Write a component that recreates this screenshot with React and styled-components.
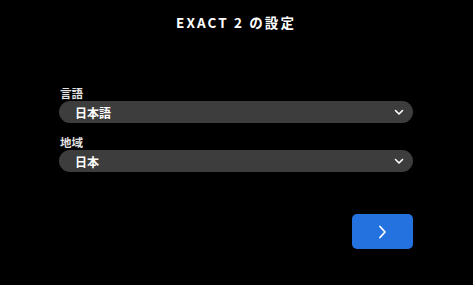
import styled, { createGlobalStyle } from "styled-components";

const Global = createGlobalStyle`
  html, body {
    margin: 0;
    padding: 0;
    background: #000;
  }
  body {
    font-family: "Noto Sans CJK JP", "Noto Sans", sans-serif;
    color: #fff;
  }
`;

const Page = styled.div`
  width: 473px;
  height: 285px;
  box-sizing: border-box;
  padding: 14px 60px 0 59px;
  display: flex;
  flex-direction: column;
`;

const Title = styled.h1`
  margin: 0;
  font-size: 13.5px;
  line-height: 17px;
  font-weight: 700;
  letter-spacing: 2.1px;
  text-align: center;
  color: #fff;
`;

const Form = styled.div`
  margin-top: 55px;
  display: flex;
  flex-direction: column;
  gap: 12px;
`;

const Field = styled.div`
  display: flex;
  flex-direction: column;
  gap: 1px;
`;

const Label = styled.div`
  font-size: 11.5px;
  line-height: 14px;
  font-weight: 700;
  color: #e2e2e2;
  padding-left: 1px;
`;

const Select = styled.div`
  height: 22px;
  border-radius: 11px;
  background: #3d3d3d;
  display: flex;
  align-items: center;
  justify-content: space-between;
  padding: 0 9px 0 16px;
  font-size: 12px;
  font-weight: 700;
  color: #fff;
`;

const Footer = styled.div`
  margin-top: 42px;
  display: flex;
  justify-content: flex-end;
`;

const NextButton = styled.button`
  width: 61px;
  height: 35px;
  border: none;
  border-radius: 5px;
  background: #2472e0;
  display: flex;
  align-items: center;
  justify-content: center;
  padding: 0;
  cursor: pointer;
`;

function Chevron() {
  return (
    <svg width="10" height="7" viewBox="0 0 10 7">
      <path
        d="M1.5 1.5 L5 5 L8.5 1.5"
        fill="none"
        stroke="#fff"
        strokeWidth="1.6"
        strokeLinecap="round"
        strokeLinejoin="round"
      />
    </svg>
  );
}

function ArrowRight() {
  return (
    <svg width="9" height="14" viewBox="0 0 9 14">
      <path
        d="M2 1.5 L7 7 L2 12.5"
        fill="none"
        stroke="#fff"
        strokeWidth="1.8"
        strokeLinecap="round"
        strokeLinejoin="round"
      />
    </svg>
  );
}

const fields = [
  { label: "言語", value: "日本語" },
  { label: "地域", value: "日本" },
];

export default function App() {
  return (
    <>
      <Global />
      <Page>
        <Title>EXACT 2 の設定</Title>
        <Form>
          {fields.map((f) => (
            <Field key={f.label}>
              <Label>{f.label}</Label>
              <Select>
                <span>{f.value}</span>
                <Chevron />
              </Select>
            </Field>
          ))}
        </Form>
        <Footer>
          <NextButton aria-label="次へ">
            <ArrowRight />
          </NextButton>
        </Footer>
      </Page>
    </>
  );
}
